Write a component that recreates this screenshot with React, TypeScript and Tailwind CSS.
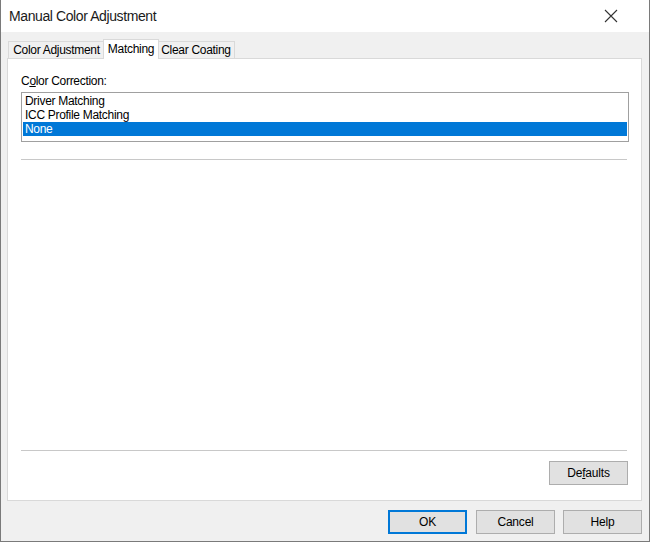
import React from 'react';

const font = { fontFamily: '"Liberation Sans", Arial, sans-serif' };

function Tab({ label, active, className = '' }: { label: string; active?: boolean; className?: string }) {
	if (active) {
		return (
			<div className={`relative z-10 -mx-[2px] mb-[-1px] flex h-[20px] shrink-0 items-start justify-center whitespace-nowrap border border-b-0 border-[#d9d9d9] bg-white pt-[1px] text-[12px] leading-[16px] tracking-[-0.3px] text-black ${className}`}>
				{label}
			</div>
		);
	}
	return (
		<div className={`flex h-[17px] shrink-0 items-start justify-center whitespace-nowrap border border-b-0 border-[#d9d9d9] bg-[#f0f0f0] pt-[1px] text-[12px] leading-[15px] tracking-[-0.3px] text-black ${className}`}>
			{label}
		</div>
	);
}

function Button({ children, primary, className = '' }: { children: React.ReactNode; primary?: boolean; className?: string }) {
	return (
		<button
			className={`flex h-[24px] w-[79px] items-center justify-center bg-[#e1e1e1] text-[12px] tracking-[-0.2px] text-black ${
				primary ? 'border-2 border-[#0078d7]' : 'border border-[#adadad]'
			} ${className}`}
		>
			{children}
		</button>
	);
}

export default function App() {
	const items = ['Driver Matching', 'ICC Profile Matching', 'None'];
	const selected = 2;

	return (
		<div style={font} className="flex h-[542px] w-[650px] flex-col border-x border-b border-[#7a7a7a] bg-[#f0f0f0]">
			{/* Title bar */}
			<div className="flex h-[32px] shrink-0 items-center justify-between bg-white pl-[8px] pr-[31px]">
				<span className="text-[14px] tracking-[-0.4px] text-[#1a1a1a]">Manual Color Adjustment</span>
				<svg width="14" height="14" viewBox="0 0 14 14" className="text-[#333]">
					<path d="M1 1L13 13M13 1L1 13" stroke="currentColor" strokeWidth="1.1" />
				</svg>
			</div>

			{/* Tabs */}
			<div className="mt-[8px] flex h-[18px] items-end pl-[7px]">
				<Tab label="Color Adjustment" className="w-[97px]" />
				<Tab label="Matching" active className="w-[56px]" />
				<Tab label="Clear Coating" className="w-[78px]" />
			</div>

			{/* Panel */}
			<div className="ml-[6px] mr-[7px] flex h-[443px] flex-col border border-[#d9d9d9] bg-white px-[13px]">
				<div className="mt-[15px] h-[14px] text-[12px] leading-[14px] tracking-[-0.3px] text-black">
					C<span className="underline">o</span>lor Correction:
				</div>
				<div className="mt-[4px] mr-[-1px] h-[50px] border border-[#a0a0a0] px-[1px] pt-[1px]">
					{items.map((item, i) => (
						<div
							key={item}
							className={`h-[14px] pl-[2px] text-[12px] leading-[14px] tracking-[-0.3px] ${
								i === selected ? 'bg-[#0078d7] text-white' : 'text-black'
							}`}
						>
							{item}
						</div>
					))}
				</div>
				<div className="mt-[17px] mr-[1px] border-t border-[#c8c8c8]" />
				<div className="flex-1" />
				<div className="mr-[1px] border-t border-[#c8c8c8]" />
				<div className="mb-[15px] mt-[10px] flex justify-end">
					<Button>
						De<span className="underline">f</span>aults
					</Button>
				</div>
			</div>

			{/* Bottom buttons */}
			<div className="mt-[9px] flex justify-end pr-[7px]">
				<Button primary>OK</Button>
				<Button className="ml-[9px]">Cancel</Button>
				<Button className="ml-[8px]">Help</Button>
			</div>
		</div>
	);
}
